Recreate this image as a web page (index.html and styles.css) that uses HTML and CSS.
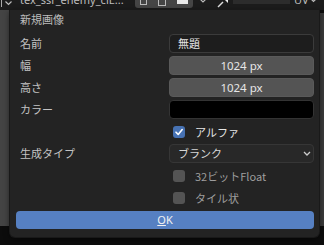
FILE: index.html
```html
<!DOCTYPE html>
<html>
<head>
<meta charset="utf-8">
<link rel="stylesheet" href="styles.css">
</head>
<body>
<div class="screen">
  <div class="header">
    <div class="hd-left"><span class="bar"></span><svg class="chev" width="7" height="5" viewBox="0 0 7 5"><path d="M0.5 0.5 L3.5 3.5 L6.5 0.5" fill="none" stroke="#bbb" stroke-width="1.2"/></svg></div>
    <div class="hd-name">tex_ssr_enemy_clE...</div>
    <div class="hd-group">
      <span class="ic ic1"></span>
      <span class="ic ic2"></span>
      <span class="ic ic3"></span>
    </div>
    <div class="hd-btn"><svg width="10" height="8" viewBox="0 0 10 8"><path d="M1 -2 L5 2 L9 -2" fill="none" stroke="#bbb" stroke-width="1.2"/></svg></div>
    <div class="hd-btn"><svg width="12" height="8" viewBox="0 0 12 8"><path d="M1 7 L6 2" stroke="#ddd" stroke-width="1.4"/><path d="M6 -2 L11 -2 L11 3 Z" fill="#eee"/></svg></div>
    <div class="hd-space"></div>
    <div class="hd-uv">UV<svg width="7" height="5" viewBox="0 0 7 5"><path d="M0.5 0.5 L3.5 3.5 L6.5 0.5" fill="none" stroke="#bbb" stroke-width="1.2"/></svg></div>
  </div>
  <div class="body">
    <div class="strip-left"></div>
    <div class="middle"></div>
    <div class="strip-right"></div>
  </div>
  <div class="bottom"></div>

  <div class="popup">
    <div class="title">新規画像</div>
    <div class="grid">
      <div class="label">名前</div>
      <div class="field text-field">無題</div>

      <div class="label">幅</div>
      <div class="field num">1024 px</div>

      <div class="label">高さ</div>
      <div class="field num">1024 px</div>

      <div class="label">カラー</div>
      <div class="field color"></div>

      <div class="label"></div>
      <div class="check-row"><span class="box checked"><svg width="10" height="10" viewBox="0 0 10 10"><path d="M2 5.2 L4.2 7.4 L8.2 2.6" fill="none" stroke="#fff" stroke-width="1.6" stroke-linecap="round" stroke-linejoin="round"/></svg></span><span class="ck-text bright">アルファ</span></div>

      <div class="label">生成タイプ</div>
      <div class="field dropdown"><span>ブランク</span><svg width="8" height="5" viewBox="0 0 8 5"><path d="M1 1 L4 4 L7 1" fill="none" stroke="#ccc" stroke-width="1.3"/></svg></div>

      <div class="label"></div>
      <div class="check-row"><span class="box"></span><span class="ck-text">32ビットFloat</span></div>

      <div class="label"></div>
      <div class="check-row"><span class="box"></span><span class="ck-text">タイル状</span></div>
    </div>
    <div class="ok"><span class="u">O</span>K</div>
  </div>
</div>
</body>
</html>
```

FILE: styles.css
```css
* { box-sizing: border-box; }
html, body { margin: 0; padding: 0; }
body {
  width: 324px;
  height: 245px;
  overflow: hidden;
  background: #0c0c0c;
  font-family: "Noto Sans CJK JP", "Noto Sans", sans-serif;
  font-size: 11px;
}
.screen {
  position: relative;
  width: 324px;
  height: 245px;
  display: flex;
  flex-direction: column;
}
.header {
  height: 10px;
  background: #1c1c1c;
  display: flex;
  align-items: flex-start;
  overflow: hidden;
  color: #bdbdbd;
}
.hd-left {
  width: 20px;
  display: flex;
  align-items: flex-start;
  gap: 3px;
}
.bar {
  width: 1px;
  height: 7px;
  background: #aaa;
  margin-left: 1px;
}
.chev { margin-top: 1px; }
.hd-name {
  width: 115px;
  margin-top: -7px;
  line-height: 14px;
  font-family: "Noto Sans", sans-serif;
  font-size: 11px;
  color: #bdbdbd;
  white-space: nowrap;
}
.hd-group {
  width: 58px;
  height: 8px;
  background: #454545;
  border-radius: 0 0 3px 3px;
  display: flex;
  justify-content: space-around;
  align-items: flex-start;
}
.ic { display: block; }
.ic1 { width: 7px; height: 5px; border: 1px solid #bbb; border-top: 0; }
.ic2 { width: 8px; height: 6px; border: 1px solid #bbb; border-top: 0; }
.ic3 { width: 11px; height: 4px; background: #e8e8e8; }
.hd-btn {
  width: 20px;
  height: 8px;
  display: flex;
  justify-content: center;
  align-items: flex-start;
}
.hd-space {
  width: 57px;
  height: 4px;
  background: #2c2c2c;
}
.hd-uv {
  margin-left: 4px;
  margin-top: -7px;
  line-height: 14px;
  font-family: "Noto Sans", sans-serif;
  color: #bbb;
  display: flex;
  align-items: center;
  gap: 1px;
}
.body {
  height: 216px;
  display: flex;
}
.strip-left {
  width: 10px;
  background: #444444;
}
.middle { flex: 1; background: #1c1c1c; }
.strip-right {
  width: 5px;
  background: #3a3a3a;
  margin-top: 3px;
}
.bottom { flex: 1; background: #0c0c0c; }

.popup {
  position: absolute;
  left: 10px;
  top: 10px;
  width: 309px;
  height: 227px;
  background: #232323;
  border-radius: 0 0 5px 5px;
  box-shadow: 0 0 0 1px #191919, 0 2px 6px rgba(0,0,0,0.6);
  padding: 2px 5px 0 10px;
}
.title {
  height: 14px;
  line-height: 14px;
  color: #bdbdbd;
  margin-bottom: 8px;
}
.grid {
  display: grid;
  grid-template-columns: 149px 145px;
  grid-auto-rows: 19px;
  row-gap: 3px;
}
.label {
  color: #c3c3c3;
  line-height: 19px;
}
.field {
  border-radius: 4px;
  line-height: 17px;
  color: #e6e6e6;
}
.text-field {
  background: #1d1d1d;
  border: 1px solid #3b3b3b;
  padding-left: 8px;
}
.num {
  background: #545454;
  border: 1px solid #5a5a5a;
  text-align: center;
  font-family: "Noto Sans", sans-serif;
  font-size: 11.5px;
}
.color {
  background: #000;
  border: 1px solid #333;
}
.dropdown {
  background: #282828;
  border: 1px solid #363636;
  padding: 0 2px 0 8px;
  display: flex;
  justify-content: space-between;
  align-items: center;
  color: #d6d6d6;
}
.check-row {
  display: flex;
  align-items: center;
  padding-left: 4px;
}
.box {
  width: 12px;
  height: 12px;
  border-radius: 3px;
  background: #545454;
  display: flex;
  align-items: center;
  justify-content: center;
}
.box.checked { background: #4772b3; }
.ck-text {
  margin-left: 10px;
  color: #9e9e9e;
}
.ck-text.bright { color: #e6e6e6; }
.ok {
  margin: 4px 0 0 -4px;
  height: 18px;
  border-radius: 4px;
  background: #5680c2;
  color: #f2f2f2;
  text-align: center;
  line-height: 18px;
  font-family: "Noto Sans", sans-serif;
}
.u { text-decoration: underline; }
```
